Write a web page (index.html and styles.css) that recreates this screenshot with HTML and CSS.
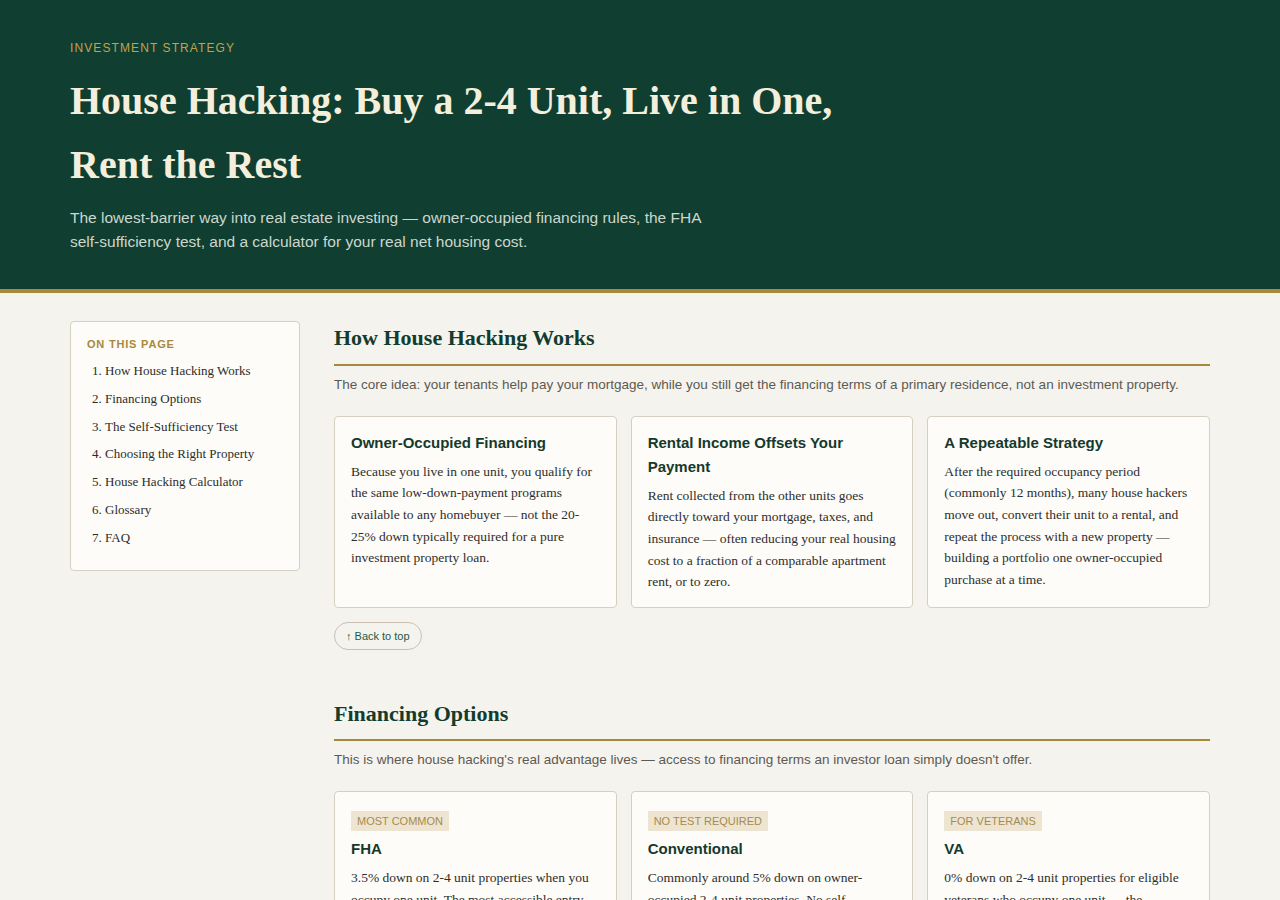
FILE: index.html
```html
<!DOCTYPE html>
<html lang="en">
<head>
<meta charset="utf-8">
<title>House Hacking: Buy a 2-4 Unit, Live in One, Rent the Rest</title>
<link rel="stylesheet" href="styles.css">
</head>
<body>
<header class="hero" id="top">
  <div class="container">
    <p class="eyebrow">Investment Strategy</p>
    <h1 class="hero-title">House Hacking: Buy a 2-4 Unit, Live in One,<br>Rent the Rest</h1>
    <p class="hero-sub">The lowest-barrier way into real estate investing — owner-occupied financing rules, the FHA self-sufficiency test, and a calculator for your real net housing cost.</p>
  </div>
</header>

<div class="container layout">
  <aside class="toc">
    <p class="toc-title">On This Page</p>
    <ol class="toc-list">
      <li><a href="#how">How House Hacking Works</a></li>
      <li><a href="#financing">Financing Options</a></li>
      <li><a href="#test">The Self-Sufficiency Test</a></li>
      <li><a href="#property">Choosing the Right Property</a></li>
      <li><a href="#calculator">House Hacking Calculator</a></li>
      <li><a href="#glossary">Glossary</a></li>
      <li><a href="#faq">FAQ</a></li>
    </ol>
  </aside>

  <main class="main">
    <section class="section" id="how">
      <h2 class="section-title">How House Hacking Works</h2>
      <p class="section-desc">The core idea: your tenants help pay your mortgage, while you still get the financing terms of a primary residence, not an investment property.</p>
      <div class="cards">
        <div class="card">
          <h3 class="card-title">Owner-Occupied Financing</h3>
          <p class="card-text">Because you live in one unit, you qualify for the same low-down-payment programs available to any homebuyer — not the 20-25% down typically required for a pure investment property loan.</p>
        </div>
        <div class="card">
          <h3 class="card-title">Rental Income Offsets Your Payment</h3>
          <p class="card-text">Rent collected from the other units goes directly toward your mortgage, taxes, and insurance — often reducing your real housing cost to a fraction of a comparable apartment rent, or to zero.</p>
        </div>
        <div class="card">
          <h3 class="card-title">A Repeatable Strategy</h3>
          <p class="card-text">After the required occupancy period (commonly 12 months), many house hackers move out, convert their unit to a rental, and repeat the process with a new property — building a portfolio one owner-occupied purchase at a time.</p>
        </div>
      </div>
      <a class="back-top" href="#top">↑ Back to top</a>
    </section>

    <section class="section" id="financing">
      <h2 class="section-title">Financing Options</h2>
      <p class="section-desc">This is where house hacking's real advantage lives — access to financing terms an investor loan simply doesn't offer.</p>
      <div class="cards">
        <div class="card">
          <span class="badge">Most Common</span>
          <h3 class="card-title">FHA</h3>
          <p class="card-text">3.5% down on 2-4 unit properties when you occupy one unit. The most accessible entry point, but 3-4 unit properties must pass the self-sufficiency test.</p>
        </div>
        <div class="card">
          <span class="badge">No Test Required</span>
          <h3 class="card-title">Conventional</h3>
          <p class="card-text">Commonly around 5% down on owner-occupied 2-4 unit properties. No self-sufficiency test, but stricter credit score and cash reserve requirements.</p>
        </div>
        <div class="card">
          <span class="badge">For Veterans</span>
          <h3 class="card-title">VA</h3>
          <p class="card-text">0% down on 2-4 unit properties for eligible veterans who occupy one unit — the strongest house hacking loan available, with no monthly mortgage insurance.</p>
        </div>
      </div>
      <a class="back-top" href="#top">↑ Back to top</a>
    </section>
  </main>
</div>
</body>
</html>
```

FILE: styles.css
```css
* { box-sizing: border-box; }

body {
  margin: 0;
  background: #f5f3ee;
  color: #2c2c2a;
  font-family: "Liberation Serif", "Times New Roman", serif;
}

.container {
  width: 1140px;
  margin: 0 auto;
}

/* Header */
.hero {
  background: #103e30;
  border-bottom: 4px solid #a8893b;
  padding: 41px 0 35px;
}

.eyebrow {
  margin: 0 0 14px;
  font-family: "Liberation Sans", Arial, sans-serif;
  font-size: 12px;
  line-height: 1.2;
  letter-spacing: 1.1px;
  text-transform: uppercase;
  color: #c2a24c;
}

.hero-title {
  margin: 0 0 9px;
  font-family: "Liberation Serif", "Times New Roman", serif;
  font-size: 40px;
  line-height: 64px;
  font-weight: 700;
  color: #f4eedc;
}

.hero-sub {
  margin: 0;
  max-width: 640px;
  font-family: "Liberation Sans", Arial, sans-serif;
  font-size: 15.5px;
  line-height: 24px;
  color: #cbd7cf;
}

/* Layout */
.layout {
  display: flex;
  align-items: flex-start;
  gap: 34px;
  padding-top: 28px;
}

.toc {
  flex: 0 0 230px;
  background: #fdfcf8;
  border: 1px solid #d6d0c3;
  border-radius: 4px;
  padding: 14px 16px 18px;
}

.toc-title {
  margin: 0 0 3px;
  font-family: "Liberation Sans", Arial, sans-serif;
  font-size: 11px;
  line-height: 17.6px;
  font-weight: 700;
  letter-spacing: 0.8px;
  text-transform: uppercase;
  color: #a8893e;
}

.toc-list {
  margin: 0;
  padding-left: 18px;
  font-size: 13px;
  color: #2c2c2a;
}

.toc-list li {
  line-height: 19.8px;
  padding: 4px 0;
}

.toc-list a {
  color: #2c2c2a;
  text-decoration: none;
}

.main {
  flex: 1;
  min-width: 0;
}

.section {
  margin-bottom: 47px;
}

.section-title {
  margin: 0;
  padding-bottom: 8px;
  border-bottom: 2px solid #a8893b;
  font-size: 22px;
  line-height: 34.4px;
  font-weight: 700;
  color: #123d2e;
}

.section-desc {
  margin: 8px 0 21px;
  font-family: "Liberation Sans", Arial, sans-serif;
  font-size: 13.5px;
  line-height: 21px;
  color: #5c5a52;
}

.cards {
  display: grid;
  grid-template-columns: repeat(3, 1fr);
  gap: 14px;
}

.card {
  background: #fdfcf8;
  border: 1px solid #d6d0c3;
  border-radius: 4px;
  padding: 14px 16px 14px;
}

.badge {
  display: inline-block;
  margin-top: 5px;
  padding: 4px 6px;
  background: #ede5d2;
  font-family: "Liberation Sans", Arial, sans-serif;
  font-size: 11px;
  line-height: 12px;
  text-transform: uppercase;
  color: #a88a4c;
}

.badge + .card-title {
  margin-top: 6px;
}

.card-title {
  margin: 0 0 6px;
  font-family: "Liberation Sans", Arial, sans-serif;
  font-size: 15px;
  line-height: 24px;
  font-weight: 700;
  color: #15392c;
}

.card-text {
  margin: 0;
  font-size: 13.5px;
  line-height: 21.6px;
  color: #2e2e2c;
}

.back-top {
  display: inline-block;
  margin-top: 14px;
  padding: 0 11px;
  border: 1px solid #c9c2b3;
  border-radius: 14px;
  font-family: "Liberation Sans", Arial, sans-serif;
  font-size: 11px;
  line-height: 26px;
  color: #1f5a3f;
  text-decoration: none;
}
```
